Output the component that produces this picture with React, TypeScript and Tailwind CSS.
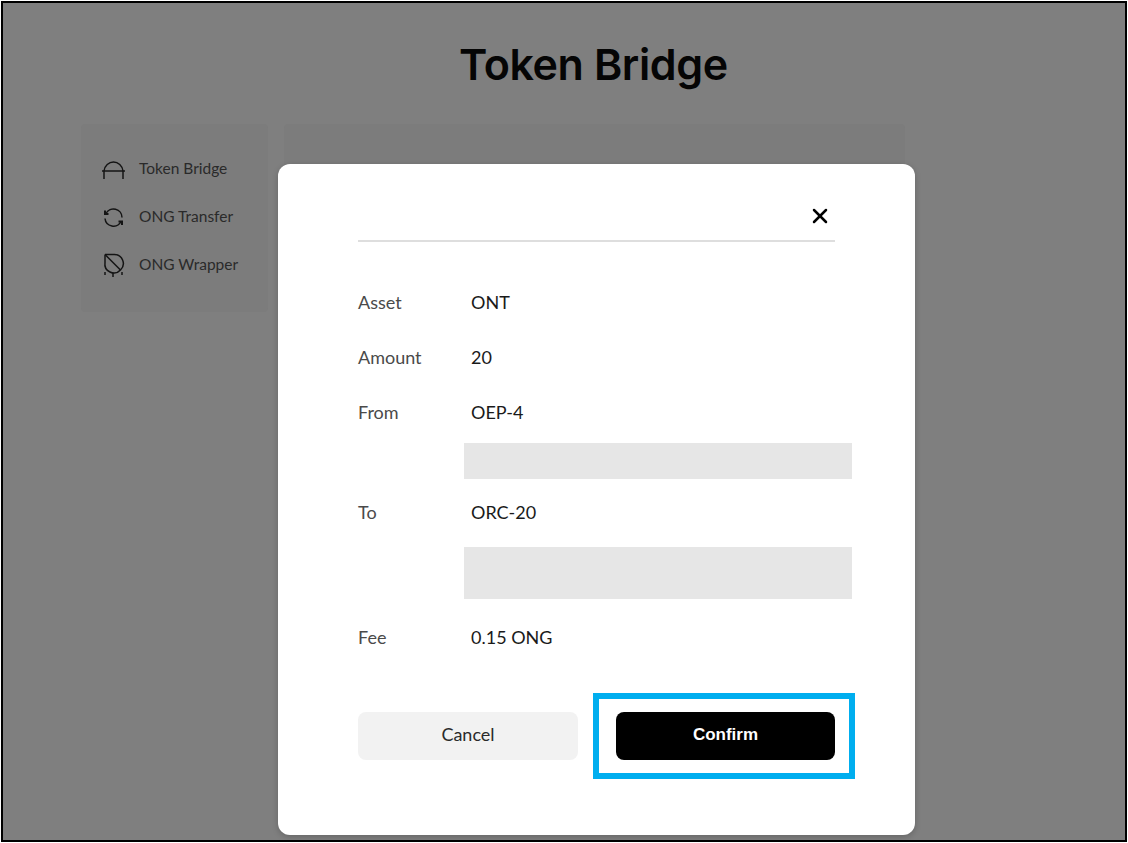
import { X } from "lucide-react";

function BridgeIcon() {
  return (
    <svg width="24" height="24" viewBox="0 0 24 24" fill="none" stroke="#141414" strokeWidth="1.5">
      <path d="M1 14h23" />
      <path d="M3 22v-8C3.500 8.500 8 5 12.500 5S21.500 8.500 22 14v8" />
    </svg>
  );
}

function TransferIcon() {
  return (
    <svg width="24" height="24" viewBox="0 0 24 24" fill="none" stroke="#141414" strokeWidth="1.5">
      <path d="M21 12.500A8.500 8.500 0 0 0 5 8.500" />
      <path d="M4 5.500v3.500h3.500" strokeWidth="2" />
      <path d="M4 13.500A8.500 8.500 0 0 0 20 16.500" />
      <path d="M21 20v-3.500h-3.500" strokeWidth="2" />
    </svg>
  );
}

function WrapperIcon() {
  return (
    <svg width="24" height="24" viewBox="0 0 24 24" fill="none" stroke="#141414" strokeWidth="1.500">
      <path d="M4 1.500h9A9 9 0 0 1 19.500 17" />
      <path d="M4 1.500v8A9 9 0 0 0 19.500 17" />
      <path d="M4.500 2L19.500 17" />
      <path d="M4 19v3M12 20v4M21 19v3" />
    </svg>
  );
}

const navItems = [
  { label: "Token Bridge", icon: <BridgeIcon /> },
  { label: "ONG Transfer", icon: <TransferIcon /> },
  { label: "ONG Wrapper", icon: <WrapperIcon /> },
];

function Row({ label, value, className }: { label: string; value: string; className: string }) {
  return (
    <div className={`flex items-center text-[18px] leading-[24px] ${className}`}>
      <span className="w-[113px] text-[#4a4a4a]">{label}</span>
      <span className="text-[#1a1a1a]">{value}</span>
    </div>
  );
}

export default function App() {
  return (
    <div className="relative h-[843px] w-[1128px] overflow-hidden bg-white p-px font-['Lato',sans-serif]">
      <div className="h-full w-full border-2 border-black bg-[#7f7f7f]">
        <h1 className="mt-[32px] pl-[456px] text-[43px] leading-[58px] font-semibold tracking-[-0.4px] text-[#050505] font-['Inter',sans-serif]">
          Token Bridge
        </h1>
        <div className="mt-[31px] flex gap-[16px] pl-[78px]">
          <nav className="flex h-[188px] w-[187px] flex-col rounded-[4px] bg-[#7c7c7c] pt-[21px] pl-[20px]">
            {navItems.map((item) => (
              <div key={item.label} className="flex h-[48px] items-center gap-[14px]">
                {item.icon}
                <span className="text-[15.5px] text-[#2a2a2a]">{item.label}</span>
              </div>
            ))}
          </nav>
          <div className="h-[188px] w-[621px] rounded-[4px] bg-[#7c7c7c]" />
        </div>
      </div>

      <div className="absolute top-[164px] left-[278px] flex h-[671px] w-[637px] flex-col rounded-[12px] bg-white px-[80px] shadow-[0_2px_6px_rgba(0,0,0,0.2)]">
        <div className="flex h-[78px] items-end justify-end border-b-2 border-[#dedede] pb-[12px]">
          <X size={24} strokeWidth={2.5} className="mr-[3px] text-black" />
        </div>
        <Row label="Asset" value="ONT" className="mt-[48px]" />
        <Row label="Amount" value="20" className="mt-[31px]" />
        <Row label="From" value="OEP-4" className="mt-[31px]" />
        <div className="mt-[19px] ml-[106px] h-[36px] w-[388px] bg-[#e6e6e6]" />
        <Row label="To" value="ORC-20" className="mt-[21px]" />
        <div className="mt-[23px] ml-[106px] h-[52px] w-[388px] bg-[#e6e6e6]" />
        <Row label="Fee" value="0.15 ONG" className="mt-[26px]" />
        <div className="mt-[63px] flex justify-between">
          <button className="h-[48px] w-[220px] rounded-[8px] bg-[#f2f2f2] pb-[4px] text-[18px] text-[#2a2a2a]">Cancel</button>
          <button className="relative h-[48px] w-[219px] rounded-[8px] bg-black pb-[2px] text-[17px] font-bold text-white font-['Liberation_Sans',sans-serif]">
            Confirm
            <span className="absolute -top-[19px] -right-[20px] -bottom-[19px] -left-[23px] border-[6px] border-[#00aeef]" />
          </button>
        </div>
      </div>
    </div>
  );
}
